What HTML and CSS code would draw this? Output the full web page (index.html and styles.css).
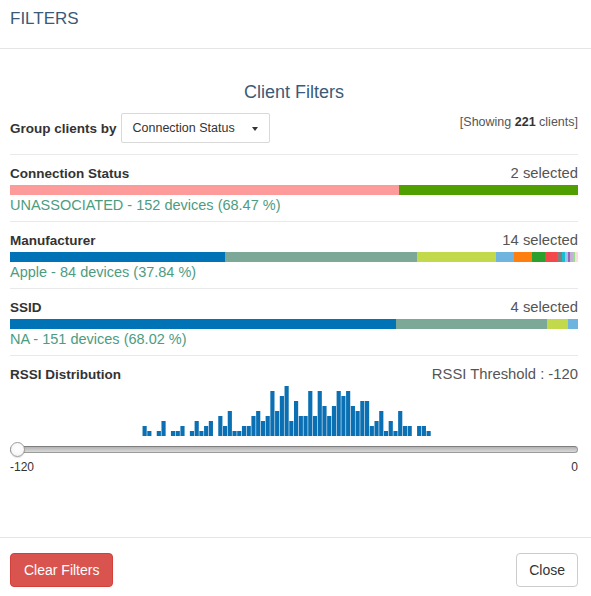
FILE: index.html
```html
<!DOCTYPE html>
<html lang="en">
<head>
<meta charset="utf-8">
<title>Filters</title>
<link rel="stylesheet" href="styles.css">
</head>
<body>
<div class="modal">
  <header class="modal-header">
    <h3 class="modal-title">FILTERS</h3>
  </header>
  <div class="modal-body">
    <h4 class="title">Client Filters</h4>
    <div class="group-row">
      <span class="group-label">Group clients by</span>
      <div class="select"><span>Connection Status</span><span class="caret"></span></div>
      <span class="showing">[Showing <b>221</b> clients]</span>
    </div>

    <div class="section">
      <div class="section-head"><span class="label">Connection Status</span><span class="count">2 selected</span></div>
      <div class="bar">
        <span class="seg c-pink" style="width:68.47%"></span>
        <span class="seg c-green" style="width:31.53%"></span>
      </div>
      <div class="legend">UNASSOCIATED - 152 devices (68.47 %)</div>
    </div>

    <div class="section">
      <div class="section-head"><span class="label">Manufacturer</span><span class="count">14 selected</span></div>
      <div class="bar">
        <span class="seg c-blue" style="width:37.84%"></span>
        <span class="seg c-sage" style="width:33.78%"></span>
        <span class="seg c-lime" style="width:13.96%"></span>
        <span class="seg c-sky" style="width:3.15%"></span>
        <span class="seg c-orange" style="width:3.15%"></span>
        <span class="seg c-dgreen" style="width:2.25%"></span>
        <span class="seg c-red" style="width:2.25%"></span>
        <span class="seg c-grey" style="width:0.9%"></span>
        <span class="seg c-cyan" style="width:0.45%"></span>
        <span class="seg c-lblue" style="width:0.45%"></span>
        <span class="seg c-purple" style="width:0.45%"></span>
        <span class="seg c-lav" style="width:0.45%"></span>
        <span class="seg c-lgreen" style="width:0.45%"></span>
        <span class="seg c-lpink" style="width:0.45%"></span>
      </div>
      <div class="legend">Apple - 84 devices (37.84 %)</div>
    </div>

    <div class="section">
      <div class="section-head"><span class="label">SSID</span><span class="count">4 selected</span></div>
      <div class="bar">
        <span class="seg c-blue" style="width:68.02%"></span>
        <span class="seg c-sage" style="width:26.58%"></span>
        <span class="seg c-lime" style="width:3.6%"></span>
        <span class="seg c-sky" style="width:1.8%"></span>
      </div>
      <div class="legend">NA - 151 devices (68.02 %)</div>
    </div>

    <div class="section rssi">
      <div class="section-head"><span class="label">RSSI Distribution</span><span class="count">RSSI Threshold : -120</span></div>
      <svg class="hist" viewBox="0 0 120 50" preserveAspectRatio="none">
        <rect x="28" y="40" width="0.88" height="10"/>
        <rect x="29" y="45" width="0.88" height="5"/>
        <rect x="31" y="45" width="0.88" height="5"/>
        <rect x="32" y="35" width="0.88" height="15"/>
        <rect x="34" y="45" width="0.88" height="5"/>
        <rect x="35" y="45" width="0.88" height="5"/>
        <rect x="36" y="40" width="0.88" height="10"/>
        <rect x="38" y="45" width="0.88" height="5"/>
        <rect x="39" y="35" width="0.88" height="15"/>
        <rect x="40" y="45" width="0.88" height="5"/>
        <rect x="41" y="40" width="0.88" height="10"/>
        <rect x="42" y="35" width="0.88" height="15"/>
        <rect x="44" y="30" width="0.88" height="20"/>
        <rect x="45" y="40" width="0.88" height="10"/>
        <rect x="46" y="25" width="0.88" height="25"/>
        <rect x="47" y="45" width="0.88" height="5"/>
        <rect x="48" y="45" width="0.88" height="5"/>
        <rect x="49" y="40" width="0.88" height="10"/>
        <rect x="50" y="40" width="0.88" height="10"/>
        <rect x="51" y="30" width="0.88" height="20"/>
        <rect x="52" y="25" width="0.88" height="25"/>
        <rect x="53" y="35" width="0.88" height="15"/>
        <rect x="54" y="30" width="0.88" height="20"/>
        <rect x="55" y="5" width="0.88" height="45"/>
        <rect x="56" y="25" width="0.88" height="25"/>
        <rect x="57" y="10" width="0.88" height="40"/>
        <rect x="58" y="0" width="0.88" height="50"/>
        <rect x="59" y="35" width="0.88" height="15"/>
        <rect x="60" y="15" width="0.88" height="35"/>
        <rect x="61" y="30" width="0.88" height="20"/>
        <rect x="62" y="30" width="0.88" height="20"/>
        <rect x="63" y="5" width="0.88" height="45"/>
        <rect x="64" y="30" width="0.88" height="20"/>
        <rect x="65" y="5" width="0.88" height="45"/>
        <rect x="66" y="20" width="0.88" height="30"/>
        <rect x="67" y="30" width="0.88" height="20"/>
        <rect x="68" y="20" width="0.88" height="30"/>
        <rect x="69" y="5" width="0.88" height="45"/>
        <rect x="70" y="10" width="0.88" height="40"/>
        <rect x="71" y="5" width="0.88" height="45"/>
        <rect x="72" y="20" width="0.88" height="30"/>
        <rect x="73" y="25" width="0.88" height="25"/>
        <rect x="74" y="15" width="0.88" height="35"/>
        <rect x="75" y="15" width="0.88" height="35"/>
        <rect x="76" y="40" width="0.88" height="10"/>
        <rect x="77" y="35" width="0.88" height="15"/>
        <rect x="78" y="25" width="0.88" height="25"/>
        <rect x="79" y="45" width="0.88" height="5"/>
        <rect x="80" y="35" width="0.88" height="15"/>
        <rect x="81" y="45" width="0.88" height="5"/>
        <rect x="82" y="25" width="0.88" height="25"/>
        <rect x="83" y="40" width="0.88" height="10"/>
        <rect x="84" y="40" width="0.88" height="10"/>
        <rect x="86" y="40" width="0.88" height="10"/>
        <rect x="87" y="40" width="0.88" height="10"/>
        <rect x="88" y="45" width="0.88" height="5"/>
      </svg>
      <div class="slider">
        <div class="track"></div>
        <div class="handle"></div>
      </div>
      <div class="slider-labels"><span>-120</span><span>0</span></div>
    </div>
  </div>
  <footer class="modal-footer">
    <button class="btn btn-danger">Clear Filters</button>
    <button class="btn btn-default">Close</button>
  </footer>
</div>
</body>
</html>
```
FILE: styles.css
```css
* { box-sizing: border-box; }

html, body {
  margin: 0;
  padding: 0;
  background: #fff;
}

body {
  font-family: "Liberation Sans", Arial, Helvetica, sans-serif;
  color: #333;
}

.modal {
  display: flex;
  flex-direction: column;
  min-height: 596px;
  width: 591px;
}

.modal-header {
  padding: 9px 10px 19px;
  border-bottom: 1px solid #e5e5e5;
}

.modal-title {
  margin: 0;
  font-size: 17px;
  line-height: 20px;
  font-weight: normal;
  color: #3b5a78;
}

.modal-body {
  flex: 1;
  padding: 31px 13px 0 10px;
}

.title {
  margin: 0 0 9px;
  font-size: 18px;
  line-height: 24px;
  font-weight: normal;
  text-align: center;
  color: #3b5a78;
}

.group-row {
  display: flex;
  align-items: center;
  height: 30px;
  margin-bottom: 11px;
}

.group-label {
  font-size: 13.5px;
  font-weight: bold;
  color: #333;
  margin-right: 4px;
}

.select {
  width: 149px;
  height: 30px;
  border: 1px solid #d9d9d9;
  border-radius: 2px;
  padding: 0 11px;
  display: flex;
  align-items: center;
  justify-content: space-between;
  font-size: 12.5px;
  color: #333;
}

.caret {
  width: 0;
  height: 0;
  border-left: 3px solid transparent;
  border-right: 3px solid transparent;
  border-top: 4px solid #333;
  margin-top: 1px;
}

.showing {
  margin-left: auto;
  align-self: flex-start;
  margin-top: 2px;
  font-size: 12.5px;
  line-height: 15px;
  color: #555;
}

.showing b {
  color: #333;
}

.section {
  border-top: 1px solid #e9e9e9;
  padding: 8px 0 8px;
}

.section-head {
  display: flex;
  justify-content: space-between;
  align-items: baseline;
  height: 20px;
  line-height: 20px;
}

.label {
  font-size: 13.5px;
  font-weight: bold;
  color: #333;
}

.count {
  font-size: 14.8px;
  color: #555;
}

.bar {
  display: flex;
  height: 10px;
  margin-top: 2px;
}

.seg {
  display: block;
  height: 100%;
}

.c-pink { background: #fd9b9b; }
.c-green { background: #4f9f00; }
.c-blue { background: #0073b7; }
.c-sage { background: #7ba897; }
.c-lime { background: #c2d94b; }
.c-sky { background: #6fb4de; }
.c-orange { background: #ff7f0e; }
.c-dgreen { background: #2ca02c; }
.c-red { background: #f4474a; }
.c-grey { background: #808080; }
.c-cyan { background: #17becf; }
.c-lblue { background: #9fc3e6; }
.c-purple { background: #9467bd; }
.c-lav { background: #c5b0d5; }
.c-lgreen { background: #98df8a; }
.c-lpink { background: #fcdcdc; }

.legend {
  margin-top: 2px;
  font-size: 14.5px;
  line-height: 16px;
  color: #4d9c7f;
}

.rssi {
  padding-bottom: 0;
}

.hist {
  display: block;
  width: 100%;
  height: 50px;
  margin-top: 2px;
}

.hist rect {
  fill: #0b70b3;
}

.slider {
  position: relative;
  height: 16px;
  margin-top: 5px;
  display: flex;
  align-items: center;
}

.track {
  width: 100%;
  height: 7px;
  border-radius: 4px;
  border: 1px solid #9a9a9a;
  border-top-color: #7e7e7e;
  background: linear-gradient(to bottom, #b3b3b3, #d9d9d9);
}

.handle {
  position: absolute;
  left: 0;
  top: 0.5px;
  width: 15px;
  height: 15px;
  border-radius: 50%;
  border: 1px solid #9c9c9c;
  background: radial-gradient(circle at 50% 40%, #ffffff 0, #f7f7f7 60%, #e6e6e6 100%);
  box-shadow: 0 1px 1px rgba(0, 0, 0, 0.12);
}

.slider-labels {
  display: flex;
  justify-content: space-between;
  margin-top: 3px;
  font-size: 12px;
  line-height: 14px;
  color: #333;
}

.modal-footer {
  border-top: 1px solid #e5e5e5;
  padding: 15px 13px 9px 10px;
  display: flex;
  justify-content: space-between;
  align-items: center;
}

.btn {
  font-family: "Liberation Sans", Arial, Helvetica, sans-serif;
  font-size: 14px;
  line-height: 20px;
  padding: 6px 12px;
  border: 1px solid transparent;
  border-radius: 4px;
  cursor: pointer;
}

.btn-danger {
  padding: 6px 13px;
  background: #d9534f;
  border-color: #d43f3a;
  color: #fff;
}

.btn-default {
  background: #fff;
  border-color: #ccc;
  color: #333;
}
```
